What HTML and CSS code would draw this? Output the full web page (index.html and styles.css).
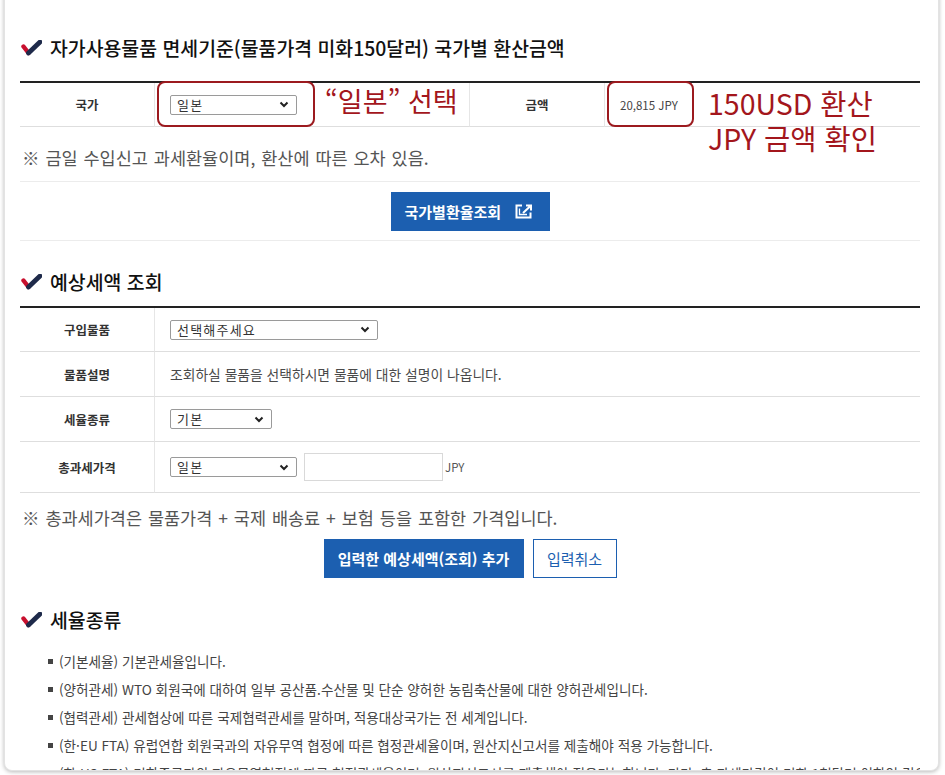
FILE: index.html
```html
<!DOCTYPE html>
<html lang="ko">
<head>
<meta charset="utf-8">
<title>예상세액 조회</title>
<link rel="stylesheet" href="styles.css">
</head>
<body>
<div class="page">
  <h2 class="title t1">
    <svg class="chk" width="21" height="16" viewBox="0 0 21 16"><path d="M2.5 6.5 L7.5 13" stroke="#c8102e" stroke-width="4.4" stroke-linecap="round" fill="none"/><path d="M7.5 13 L19 2" stroke="#1e2a4a" stroke-width="4.8" stroke-linecap="round" fill="none"/></svg>
    <span>자가사용물품 면세기준(물품가격 미화150달러) 국가별 환산금액</span>
  </h2>

  <div class="tbl1">
    <div class="cell lbl">국가</div>
    <div class="cell val">
      <div class="sel w127"><span>일본</span><svg class="chev" width="10" height="7" viewBox="0 0 10 7"><path d="M1.5 1.5 L5 5 L8.5 1.5" stroke="#222" stroke-width="2" fill="none"/></svg></div>
      <div class="anno-box box1"></div>
      <div class="anno-text txt1">“일본” 선택</div>
    </div>
    <div class="cell lbl">금액</div>
    <div class="cell val last">
      <span class="amount">20,815 JPY</span>
      <div class="anno-box box2"></div>
      <div class="anno-text txt2"><div class="aline">150USD 환산</div><div class="aline">JPY 금액 확인</div></div>
    </div>
  </div>

  <p class="note n1">※ 금일 수입신고 과세환율이며, 환산에 따른 오차 있음.</p>

  <div class="btn-area">
    <button class="btn primary wide">국가별환율조회 <svg class="ext" width="18" height="15" viewBox="0 0 18 15"><path d="M7 1.5H1.5V13.5H15.5V8.5" stroke="#fff" stroke-width="2" fill="none"/><path d="M4.5 4.5V10.5H12" stroke="#fff" stroke-width="1.3" fill="none"/><path d="M8 9 L16 1.5 M11 1.5H16V6.5" stroke="#fff" stroke-width="2" fill="none"/></svg></button>
  </div>

  <h2 class="title t2">
    <svg class="chk" width="21" height="16" viewBox="0 0 21 16"><path d="M2.5 6.5 L7.5 13" stroke="#c8102e" stroke-width="4.4" stroke-linecap="round" fill="none"/><path d="M7.5 13 L19 2" stroke="#1e2a4a" stroke-width="4.8" stroke-linecap="round" fill="none"/></svg>
    <span>예상세액 조회</span>
  </h2>

  <div class="tbl2">
    <div class="cell lbl r1">구입물품</div>
    <div class="cell val r1"><div class="sel w208"><span>선택해주세요</span><svg class="chev" width="10" height="7" viewBox="0 0 10 7"><path d="M1.5 1.5 L5 5 L8.5 1.5" stroke="#222" stroke-width="2" fill="none"/></svg></div></div>
    <div class="cell lbl">물품설명</div>
    <div class="cell val"><span class="desc">조회하실 물품을 선택하시면 물품에 대한 설명이 나옵니다.</span></div>
    <div class="cell lbl">세율종류</div>
    <div class="cell val"><div class="sel w102"><span>기본</span><svg class="chev" width="10" height="7" viewBox="0 0 10 7"><path d="M1.5 1.5 L5 5 L8.5 1.5" stroke="#222" stroke-width="2" fill="none"/></svg></div></div>
    <div class="cell lbl r4">총과세가격</div>
    <div class="cell val r4">
      <div class="sel w127"><span>일본</span><svg class="chev" width="10" height="7" viewBox="0 0 10 7"><path d="M1.5 1.5 L5 5 L8.5 1.5" stroke="#222" stroke-width="2" fill="none"/></svg></div>
      <div class="input"></div>
      <span class="unit">JPY</span>
    </div>
  </div>

  <p class="note n2">※ 총과세가격은 물품가격 + 국제 배송료 + 보험 등을 포함한 가격입니다.</p>

  <div class="btn-row">
    <button class="btn primary">입력한 예상세액(조회) 추가</button>
    <button class="btn outline">입력취소</button>
  </div>

  <h2 class="title t3">
    <svg class="chk" width="21" height="16" viewBox="0 0 21 16"><path d="M2.5 6.5 L7.5 13" stroke="#c8102e" stroke-width="4.4" stroke-linecap="round" fill="none"/><path d="M7.5 13 L19 2" stroke="#1e2a4a" stroke-width="4.8" stroke-linecap="round" fill="none"/></svg>
    <span>세율종류</span>
  </h2>

  <ul class="rates">
    <li>(기본세율) 기본관세율입니다.</li>
    <li>(양허관세) WTO 회원국에 대하여 일부 공산품.수산물 및 단순 양허한 농림축산물에 대한 양허관세입니다.</li>
    <li>(협력관세) 관세협상에 따른 국제협력관세를 말하며, 적용대상국가는 전 세계입니다.</li>
    <li>(한·EU FTA) 유럽연합 회원국과의 자유무역 협정에 따른 협정관세율이며, 원산지신고서를 제출해야 적용 가능합니다.</li>
    <li>(한·US FTA) 미합중국과의 자유무역협정에 따른 협정관세율이며, 원산지신고서를 제출해야 적용가능합니다. 다만, 총 과세가격이 미화 1천달러 이하인 경우</li>
  </ul>
</div>
</body>
</html>
```

FILE: styles.css
```css
* { box-sizing: border-box; }
html, body { margin: 0; padding: 0; background: #fff; }
body {
  font-family: "Noto Sans CJK KR", "Noto Sans", sans-serif;
  color: #333;
  width: 945px;
  height: 775px;
  overflow: hidden;
}
.page {
  width: 935px;
  height: 781px;
  margin: -10px 0 0 4px;
  padding: 44px 18px 0 15px;
  border: 1px solid #e3e3e3;
  border-top: none;
  border-radius: 0 0 8px 8px;
  box-shadow: 0 1px 4px rgba(0,0,0,0.28);
  overflow: hidden;
  background: #fff;
}
.title {
  display: flex;
  align-items: center;
  gap: 8px;
  height: 28px;
  margin: 0 0 0 1px;
  font-size: 19.4px;
  font-weight: 500;
  line-height: 28px;
  color: #111;
  letter-spacing: 0;
}
.chk { flex: none; }
.t2 { margin-top: 27px; }
.t3 { margin-top: 28px; }

.tbl1 {
  margin-top: 19px;
  display: grid;
  grid-template-columns: 135px 315px 135px 1fr;
  border-top: 2px solid #222;
}
.tbl2 {
  margin-top: 10px;
  display: grid;
  grid-template-columns: 135px 1fr;
  border-top: 2px solid #222;
}
.cell {
  height: 45px;
  border-bottom: 1px solid #dedede;
  display: flex;
  align-items: center;
  position: relative;
  font-size: 12.5px;
}
.tbl1 .cell { height: 44px; }
.tbl2 .r1 { height: 44px; }
.tbl2 .r4 { height: 51px; }
.lbl {
  justify-content: center;
  font-weight: 700;
  color: #333;
  border-right: 1px solid #e6e6e6;
  font-size: 12.5px;
}
.val { padding-left: 15px; border-right: 1px solid #e6e6e6; }
.val.last, .tbl2 .val { border-right: none; }

.sel {
  height: 20px;
  border: 1px solid #9a9a9a;
  border-radius: 2px;
  background: #fff;
  display: flex;
  align-items: center;
  justify-content: space-between;
  padding: 0 7px 0 6px;
  font-size: 13px;
  color: #333;
  line-height: 18px;
  letter-spacing: 1.2px;
}
.w127 { width: 127px; }
.w208 { width: 208px; }
.w102 { width: 102px; }
.chev { flex: none; }
.input {
  width: 139px;
  height: 28px;
  border: 1px solid #d9d9d9;
  margin-left: 7px;
  background: #fff;
}
.unit { font-size: 11.5px; color: #555; margin-left: 2px; }
.desc { font-size: 13.8px; color: #4a4a4a; }
.amount { font-size: 11.5px; color: #444; }

.anno-box {
  position: absolute;
  top: -2px;
  height: 46px;
  border: 2px solid #9c1a1f;
  border-radius: 8px;
  pointer-events: none;
}
.box1 { left: 2px; width: 158px; }
.box2 { left: 2px; width: 87px; }
.anno-text {
  position: absolute;
  color: #a3161c;
  font-family: "Noto Sans CJK KR", "Noto Sans", sans-serif;
  white-space: nowrap;
  z-index: 2;
}
.txt1 { left: 170px; top: 1px; font-size: 27px; line-height: 33px; }
.txt2 { left: 103px; top: 4px; font-size: 28.5px; }
.aline { height: 35px; line-height: 32px; }

.note {
  margin: 0;
  font-size: 17.5px;
  line-height: 24px;
  color: #555;
  padding-left: 2px;
  word-spacing: 1px;
}
.n1 { margin-top: 19px; }
.n2 { margin-top: 13px; }

.btn-area {
  margin-top: 11px;
  border-top: 1px solid #ececec;
  border-bottom: 1px solid #ececec;
  padding: 10px 0 9px;
  display: flex;
  justify-content: center;
}
.btn {
  height: 39px;
  font-family: "Noto Sans CJK KR", "Noto Sans", sans-serif;
  font-size: 15px;
  border: 1px solid #1c5fb0;
  padding: 0;
  display: inline-flex;
  align-items: center;
  white-space: nowrap;
  cursor: pointer;
}
.primary { background: #1c5fb0; color: #fff; font-weight: 700; }
.wide { width: 159px; padding: 0 13px; justify-content: flex-start; gap: 14px; }
.ext { flex: none; }
.outline { background: #fff; color: #1c5fb0; }
.btn-row {
  margin-top: 9px;
  display: flex;
  justify-content: center;
  gap: 9px;
}
.btn-row .primary { width: 200px; justify-content: center; }
.btn-row .outline { width: 84px; justify-content: center; }

.rates {
  list-style: none;
  margin: 13px 0 0;
  padding: 0 0 0 28px;
  overflow: hidden;
}
.rates li {
  height: 28px;
  line-height: 28px;
  font-size: 13.6px;
  color: #444;
  white-space: nowrap;
  display: flex;
  align-items: center;
}
.rates li::before {
  content: "";
  width: 5px;
  height: 5px;
  background: #444;
  margin-right: 6px;
  flex: none;
}
```
